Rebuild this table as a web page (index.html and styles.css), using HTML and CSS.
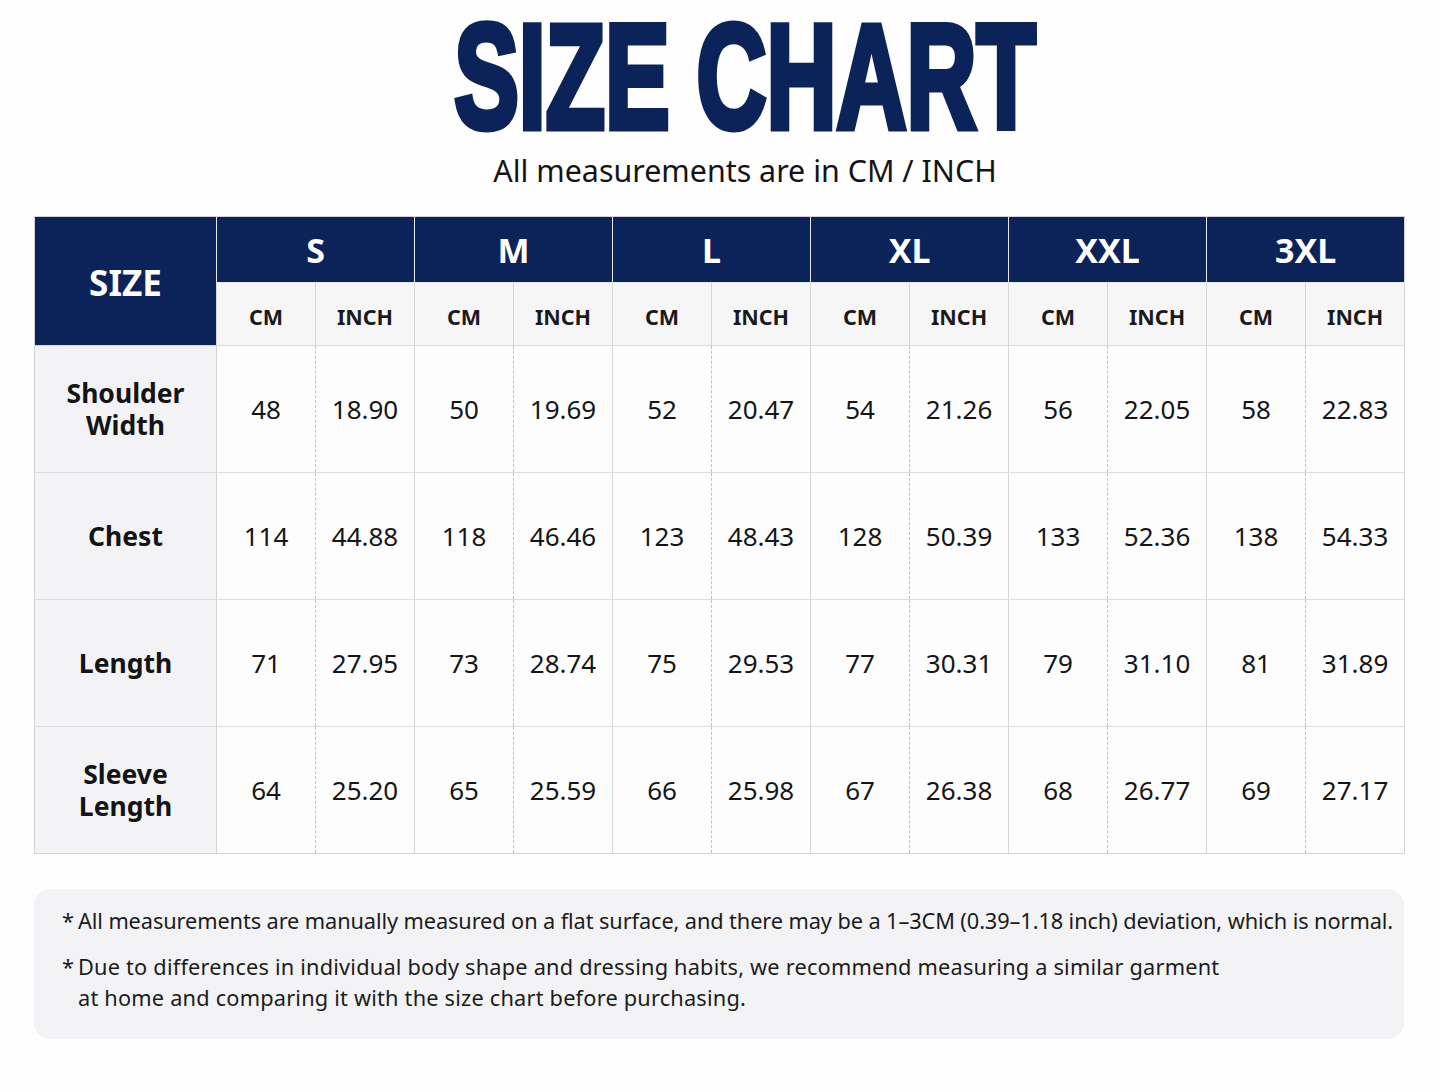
FILE: index.html
```html
<!DOCTYPE html>
<html lang="en">
<head>
<meta charset="utf-8">
<title>Size Chart</title>
<link rel="stylesheet" href="styles.css">
</head>
<body>
<div class="page">
  <header class="head">
    <h1 class="title"><span class="title-inner">SIZE CHART</span></h1>
    <p class="subtitle">All measurements are in CM / INCH</p>
  </header>

  <table class="chart">
    <colgroup>
      <col class="c-label">
      <col class="c-val"><col class="c-val">
      <col class="c-val"><col class="c-val">
      <col class="c-val"><col class="c-val">
      <col class="c-val"><col class="c-val">
      <col class="c-val"><col class="c-val">
      <col class="c-val"><col class="c-val">
    </colgroup>
    <thead>
      <tr class="h1">
        <th rowspan="2" class="size-head">SIZE</th>
        <th colspan="2">S</th>
        <th colspan="2">M</th>
        <th colspan="2">L</th>
        <th colspan="2">XL</th>
        <th colspan="2">XXL</th>
        <th colspan="2">3XL</th>
      </tr>
      <tr class="h2">
        <th>CM</th><th>INCH</th>
        <th>CM</th><th>INCH</th>
        <th>CM</th><th>INCH</th>
        <th>CM</th><th>INCH</th>
        <th>CM</th><th>INCH</th>
        <th>CM</th><th>INCH</th>
      </tr>
    </thead>
    <tbody>
      <tr>
        <th class="row-label">Shoulder<br>Width</th>
        <td>48</td><td class="inch">18.90</td>
        <td>50</td><td class="inch">19.69</td>
        <td>52</td><td class="inch">20.47</td>
        <td>54</td><td class="inch">21.26</td>
        <td>56</td><td class="inch">22.05</td>
        <td>58</td><td class="inch">22.83</td>
      </tr>
      <tr>
        <th class="row-label">Chest</th>
        <td>114</td><td class="inch">44.88</td>
        <td>118</td><td class="inch">46.46</td>
        <td>123</td><td class="inch">48.43</td>
        <td>128</td><td class="inch">50.39</td>
        <td>133</td><td class="inch">52.36</td>
        <td>138</td><td class="inch">54.33</td>
      </tr>
      <tr>
        <th class="row-label">Length</th>
        <td>71</td><td class="inch">27.95</td>
        <td>73</td><td class="inch">28.74</td>
        <td>75</td><td class="inch">29.53</td>
        <td>77</td><td class="inch">30.31</td>
        <td>79</td><td class="inch">31.10</td>
        <td>81</td><td class="inch">31.89</td>
      </tr>
      <tr>
        <th class="row-label">Sleeve<br>Length</th>
        <td>64</td><td class="inch">25.20</td>
        <td>65</td><td class="inch">25.59</td>
        <td>66</td><td class="inch">25.98</td>
        <td>67</td><td class="inch">26.38</td>
        <td>68</td><td class="inch">26.77</td>
        <td>69</td><td class="inch">27.17</td>
      </tr>
    </tbody>
  </table>

  <section class="notes">
    <p class="note"><span class="star">*</span><span>All measurements are manually measured on a flat surface, and there may be a 1–3CM (0.39–1.18 inch) deviation, which is normal.</span></p>
    <p class="note note-wide"><span class="star">*</span><span>Due to differences in individual body shape and dressing habits, we recommend measuring a similar garment<br>at home and comparing it with the size chart before purchasing.</span></p>
  </section>
</div>
</body>
</html>
```

FILE: styles.css
```css
html, body {
  margin: 0;
  padding: 0;
  background: #fefefe;
}

body {
  font-family: "Noto Sans", "Open Sans", "DejaVu Sans", sans-serif;
  color: #111111;
}

.page {
  width: 1440px;
  height: 1092px;
  padding: 0 36px 0 34px;
  box-sizing: border-box;
  overflow: hidden;
}

.head {
  text-align: center;
  padding-top: 13px;
  padding-left: 52px;
}

.title {
  margin: 0;
  height: 128px;
  line-height: 128px;
  font-family: "Liberation Sans", "DejaVu Sans", sans-serif;
  font-weight: 700;
  font-size: 148px;
  color: #0b2359;
  letter-spacing: 0;
}

.title-inner {
  display: inline-block;
  -webkit-text-stroke: 7px #0b2359;
  transform: scaleX(0.655);
  transform-origin: center;
  white-space: nowrap;
}

.subtitle {
  margin: 10px 0 0;
  font-size: 30.4px;
  line-height: 40px;
  color: #141414;
  font-weight: 400;
}

.chart {
  margin-top: 25px;
  width: 1370px;
  border-collapse: collapse;
  table-layout: fixed;
  border: 1.5px solid #d3d3d7;
}

.c-label { width: 182px; }
.c-val { width: 99px; }

.chart th, .chart td {
  padding: 0;
  text-align: center;
  vertical-align: middle;
}

.h1 th {
  height: 65px;
  background: #0b2359;
  color: #ffffff;
  font-size: 34px;
  font-weight: 700;
  border-left: 1.5px solid #e6e8ee;
  border-bottom: 1px solid #e6e8ee;
}

.h1 th.size-head {
  font-size: 35px;
  border-left: none;
  border-bottom: 1.5px solid #d3d3d7;
  padding-top: 2px;
}

.h2 th {
  height: 58px;
  background: #f6f6f7;
  color: #1a1a1a;
  font-size: 21.5px;
  font-weight: 700;
  border-left: 1.5px solid #d6d6da;
  padding-top: 4px;
}

.chart tbody tr {
  height: 127px;
}

.chart tbody tr + tr {
  border-top: 1.5px solid #dcdcdf;
}

thead + tbody tr:first-child {
  border-top: 1.5px solid #dcdcdf;
}

.row-label {
  background: #f3f3f5;
  font-size: 26.5px;
  line-height: 32px;
  font-weight: 700;
  color: #141414;
  border-right: 1.5px solid #d3d3d7;
}

.chart td {
  background: #fdfdfd;
  font-size: 26px;
  color: #151515;
  border-left: 1.5px solid #d6d6da;
}

.chart td.inch {
  border-left: 1.5px dashed #c0c0c4;
}

.notes {
  margin-top: 35px;
  width: 1370px;
  box-sizing: border-box;
  background: #f3f3f5;
  border-radius: 16px;
  padding: 16px 2px 26px 28px;
}

.note {
  display: flex;
  margin: 0;
  font-size: 21.75px;
  line-height: 31px;
  color: #1c1c1c;
  letter-spacing: -0.1px;
  white-space: nowrap;
}

.note-wide {
  letter-spacing: 0.2px;
}

.note + .note {
  margin-top: 15px;
}

.star {
  width: 16px;
  flex: none;
}
```
